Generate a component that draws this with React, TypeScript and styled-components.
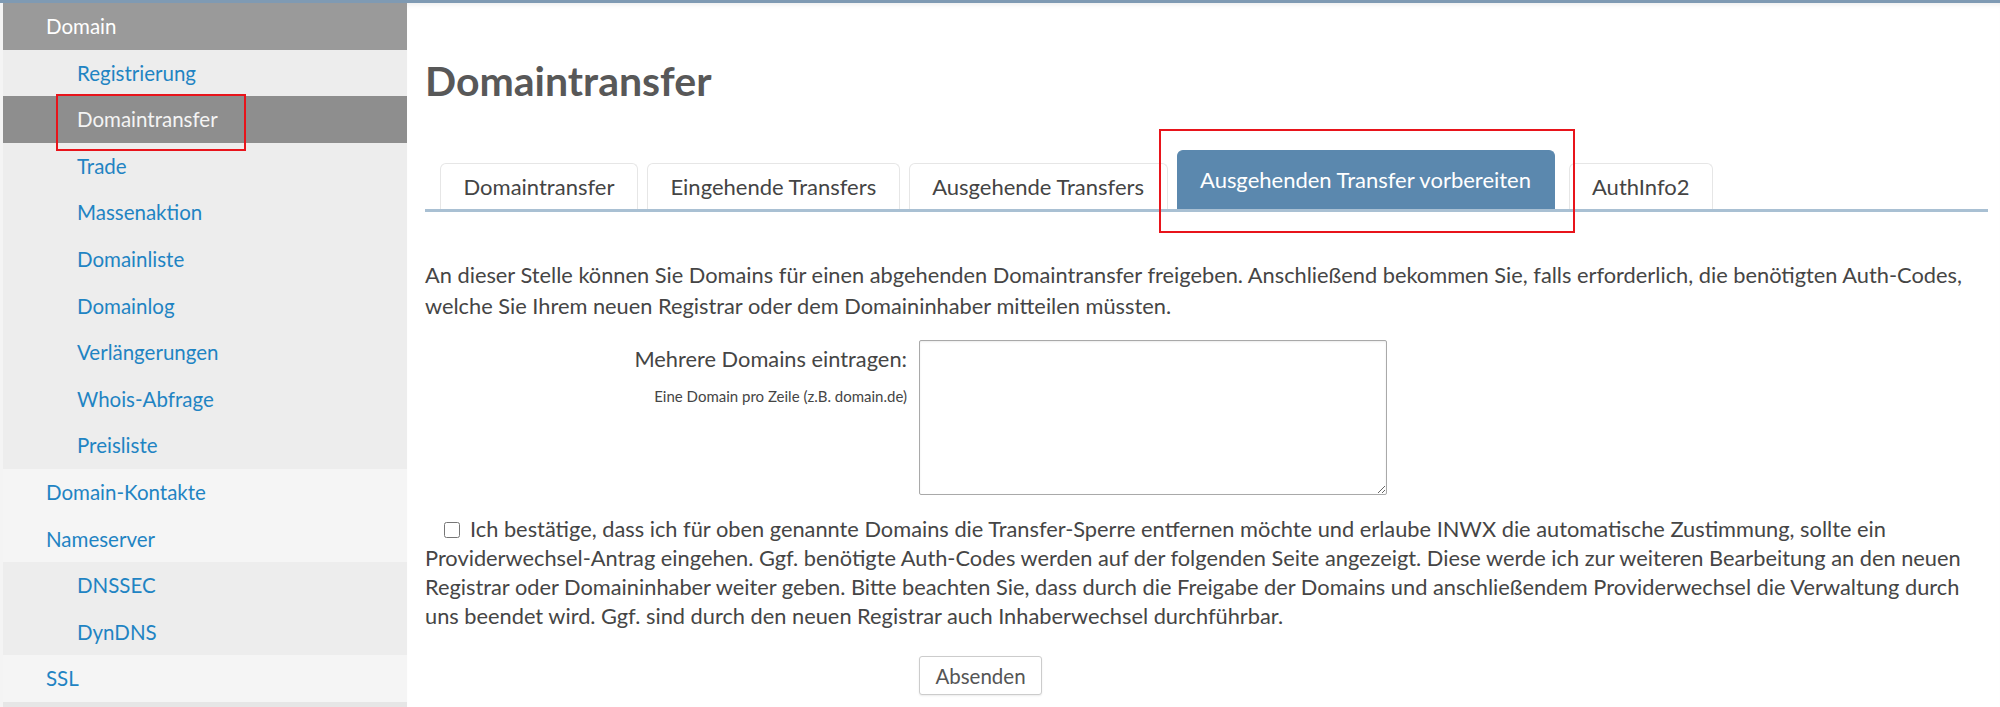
import React from "react";
import styled, { createGlobalStyle } from "styled-components";

const GlobalStyle = createGlobalStyle`
  html, body { margin: 0; padding: 0; background: #fff; }
  body { font-family: Lato, "Open Sans", sans-serif; color: #454545; }
  * { box-sizing: border-box; }
`;

const Page = styled.div`
  width: 2000px;
  height: 707px;
  overflow: hidden;
  border-top: 3px solid #7f9ab3;
  display: flex;
  background: #f4f4f4;
`;

const Sidebar = styled.nav`
  flex: none;
  width: 404px;
  margin-left: 3px;
  background: #e6e6e6;
  display: flex;
  flex-direction: column;
`;

type Variant = "header" | "active" | "sub" | "top";

const bg: Record<Variant, string> = {
  header: "#9a9a9a",
  active: "#8e8e8e",
  sub: "#ededed",
  top: "#f5f5f5",
};
const fg: Record<Variant, string> = {
  header: "#ffffff",
  active: "#f4f4f4",
  sub: "#1f84c3",
  top: "#1f84c3",
};

const NavItem = styled.div<{ $variant: Variant; $indent: boolean; $marked?: boolean }>`
  position: relative;
  z-index: ${(p) => (p.$marked ? 2 : 1)};
  flex: none;
  height: 46.6px;
  line-height: 46.6px;
  font-size: 20.5px;
  padding-left: ${(p) => (p.$indent ? 74 : 43)}px;
  background: ${(p) => bg[p.$variant]};
  color: ${(p) => fg[p.$variant]};
  &::after {
    content: "";
    display: ${(p) => (p.$marked ? "block" : "none")};
    position: absolute;
    left: 53px;
    top: -2px;
    width: 186px;
    height: 53px;
    border: 2px solid #e8141b;
  }
`;

const Main = styled.main`
  flex: 1;
  background: #fff;
  padding: 0 12px 0 18px;
  box-shadow: inset 0 5px 6px -5px rgba(0, 0, 0, 0.12);
`;

const Title = styled.h1`
  margin: 53px 0 0;
  font-size: 41px;
  line-height: 50px;
  font-weight: 700;
  color: #585858;
`;

const TabBar = styled.div`
  margin-top: 44px;
  padding-left: 15px;
  display: flex;
  align-items: flex-end;
  border-bottom: 3px solid #a9c0d3;
`;

const Tab = styled.div<{ $active?: boolean }>`
  position: relative;
  z-index: ${(p) => (p.$active ? 2 : 1)};
  height: ${(p) => (p.$active ? 59 : 46)}px;
  padding: ${(p) => (p.$active ? "16px 22.5px 0" : "10px 22.5px 0")};
  margin-right: ${(p) => (p.$active ? 14 : 9)}px;
  font-size: 22px;
  line-height: 26px;
  white-space: nowrap;
  border: 1px solid ${(p) => (p.$active ? "#5b88ae" : "#e6e6e6")};
  border-bottom: none;
  border-radius: 6px 6px 0 0;
  background: ${(p) => (p.$active ? "#5b88ae" : "#fff")};
  color: ${(p) => (p.$active ? "#fff" : "#444")};
  &::after {
    content: "";
    display: ${(p) => (p.$active ? "block" : "none")};
    position: absolute;
    left: -19px;
    top: -22px;
    width: 412px;
    height: 100px;
    border: 2px solid #e8141b;
  }
`;

const Intro = styled.p`
  margin: 48px 0 0;
  font-size: 21.8px;
  line-height: 30.5px;
`;

const FormRow = styled.div`
  margin-top: 19px;
  display: grid;
  grid-template-columns: 482px 468px;
  column-gap: 12px;
`;

const LabelCol = styled.div`
  padding-top: 6px;
  text-align: right;
`;

const Label = styled.label`
  display: block;
  font-size: 21.8px;
  line-height: 26px;
`;

const Hint = styled.div`
  margin-top: 14px;
  font-size: 15px;
  line-height: 20px;
`;

const Area = styled.textarea`
  width: 468px;
  height: 155px;
  border: 1px solid #a9a9a9;
  border-radius: 2px;
  box-shadow: inset 0 1px 2px rgba(0, 0, 0, 0.08);
  font-family: inherit;
  resize: both;
  display: block;
`;

const Confirm = styled.p`
  margin: 19px 0 0;
  font-size: 21.8px;
  line-height: 29px;
`;

const Check = styled.input`
  width: 16px;
  height: 16px;
  margin: 0 10px 0 19px;
  vertical-align: -1px;
`;

const SubmitButton = styled.button`
  display: block;
  margin: 26px 0 0 494px;
  width: 123px;
  height: 39px;
  font-family: inherit;
  font-size: 20.5px;
  color: #555;
  background: #fff;
  border: 1px solid #cccccc;
  border-radius: 3px;
  box-shadow: 0 1px 2px rgba(0, 0, 0, 0.08);
`;

const nav: { label: string; variant: Variant; indent: boolean; marked?: boolean }[] = [
  { label: "Domain", variant: "header", indent: false },
  { label: "Registrierung", variant: "sub", indent: true },
  { label: "Domaintransfer", variant: "active", indent: true, marked: true },
  { label: "Trade", variant: "sub", indent: true },
  { label: "Massenaktion", variant: "sub", indent: true },
  { label: "Domainliste", variant: "sub", indent: true },
  { label: "Domainlog", variant: "sub", indent: true },
  { label: "Verlängerungen", variant: "sub", indent: true },
  { label: "Whois-Abfrage", variant: "sub", indent: true },
  { label: "Preisliste", variant: "sub", indent: true },
  { label: "Domain-Kontakte", variant: "top", indent: false },
  { label: "Nameserver", variant: "top", indent: false },
  { label: "DNSSEC", variant: "sub", indent: true },
  { label: "DynDNS", variant: "sub", indent: true },
  { label: "SSL", variant: "top", indent: false },
];

const tabs = [
  "Domaintransfer",
  "Eingehende Transfers",
  "Ausgehende Transfers",
  "Ausgehenden Transfer vorbereiten",
  "AuthInfo2",
];

export default function App() {
  return (
    <>
      <GlobalStyle />
      <Page>
        <Sidebar>
          {nav.map((n) => (
            <NavItem key={n.label} $variant={n.variant} $indent={n.indent} $marked={n.marked}>
              {n.label}
            </NavItem>
          ))}
        </Sidebar>
        <Main>
          <Title>Domaintransfer</Title>
          <TabBar>
            {tabs.map((t, i) => (
              <Tab key={t} $active={i === 3}>
                {t}
              </Tab>
            ))}
          </TabBar>
          <Intro>
            An dieser Stelle können Sie Domains für einen abgehenden Domaintransfer freigeben. Anschließend bekommen Sie, falls erforderlich, die benötigten Auth-Codes, welche Sie Ihrem neuen Registrar oder dem Domaininhaber mitteilen müssten.
          </Intro>
          <FormRow>
            <LabelCol>
              <Label htmlFor="domains">Mehrere Domains eintragen:</Label>
              <Hint>Eine Domain pro Zeile (z.B. domain.de)</Hint>
            </LabelCol>
            <Area id="domains" />
          </FormRow>
          <Confirm>
            <Check type="checkbox" />
            Ich bestätige, dass ich für oben genannte Domains die Transfer-Sperre entfernen möchte und erlaube INWX die automatische Zustimmung, sollte ein Providerwechsel-Antrag eingehen. Ggf. benötigte Auth-Codes werden auf der folgenden Seite angezeigt. Diese werde ich zur weiteren Bearbeitung an den neuen Registrar oder Domaininhaber weiter geben. Bitte beachten Sie, dass durch die Freigabe der Domains und anschließendem Providerwechsel die Verwaltung durch uns beendet wird. Ggf. sind durch den neuen Registrar auch Inhaberwechsel durchführbar.
          </Confirm>
          <SubmitButton>Absenden</SubmitButton>
        </Main>
      </Page>
    </>
  );
}
